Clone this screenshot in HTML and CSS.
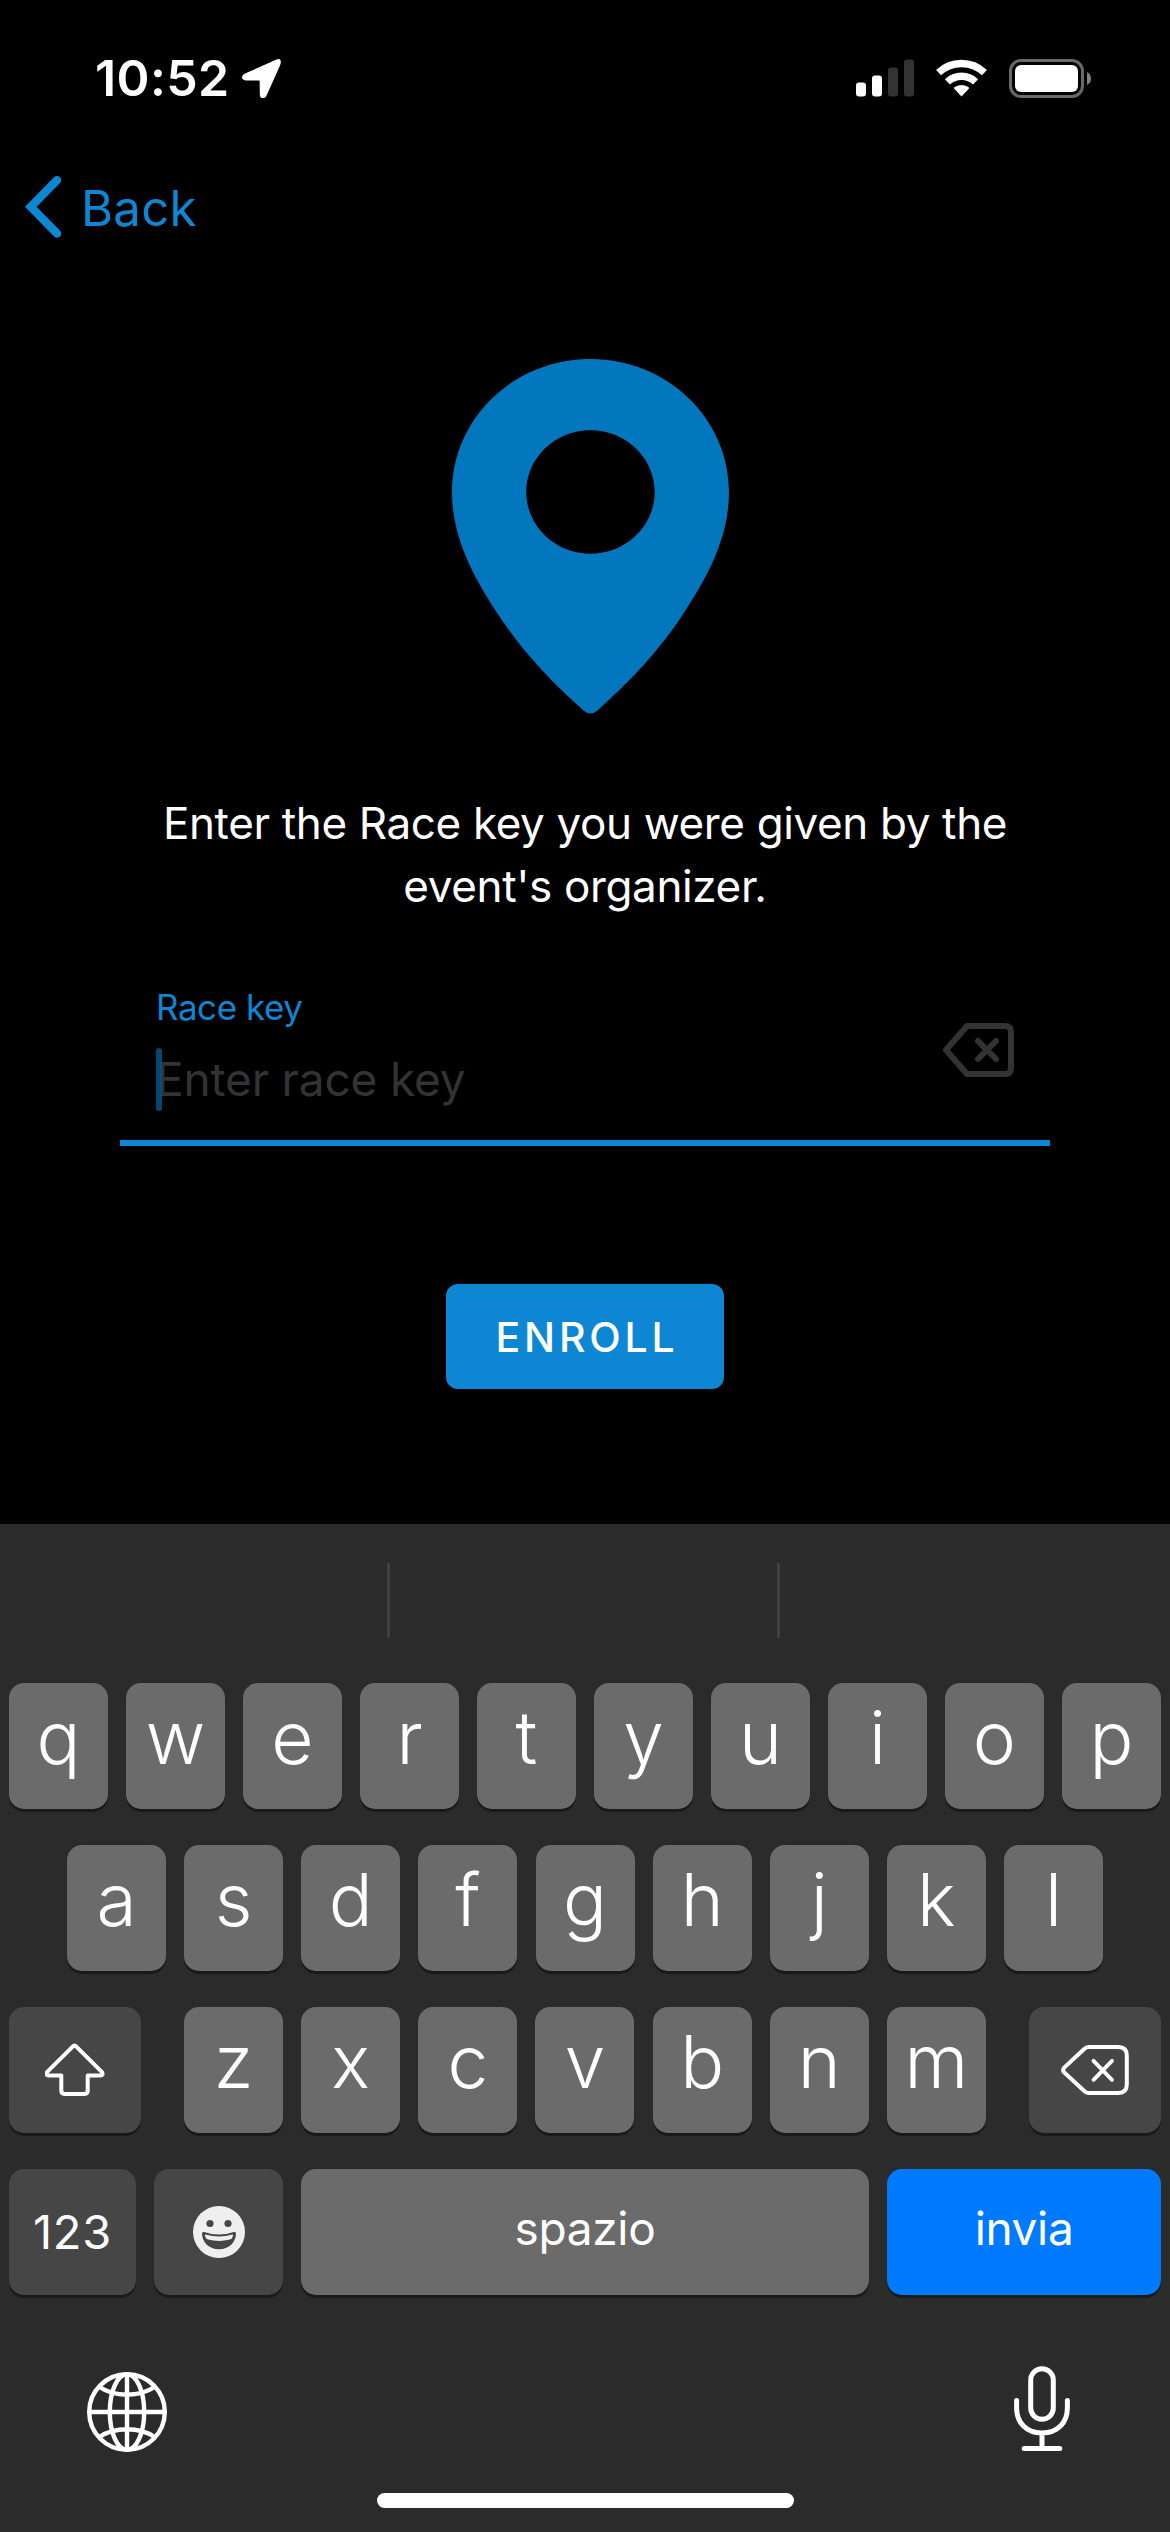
FILE: index.html
```html
<!DOCTYPE html>
<html lang="en">
<head>
<meta charset="utf-8">
<title>Enroll</title>
<link rel="stylesheet" href="styles.css">
</head>
<body>
<div class="screen">
  <header class="status">
    <div class="status-left">
      <span class="time">10:52</span>
      <svg class="location" width="39" height="39" viewBox="0 0 39 39"><path d="M34.6 0.5 Q39 -1.2 38.8 3.6 Q38.7 4.9 38 6.4 L24.6 36.4 Q23.2 39.4 20.4 39.2 Q17.8 38.8 17.8 35.6 L17.7 22.4 Q17.7 21.5 16.8 21.5 L3.6 21.4 Q0.3 21.3 0 18.6 Q-0.1 16 3 14.6 Z" fill="#fff"/></svg>
    </div>
    <div class="status-right">
      <svg width="58" height="38" viewBox="0 0 58 38"><g fill="#fff"><rect x="0" y="23.5" width="10" height="14" rx="3"/><rect x="16" y="16.5" width="10" height="21" rx="3"/></g><g fill="#333"><rect x="32" y="8.5" width="10" height="29" rx="3"/><rect x="48" y="0.5" width="10" height="37" rx="3"/></g></svg>
      <svg width="51" height="38" viewBox="0 0 51 38"><path d="M2.6 13.6 A33.3 33.3 0 0 1 48.4 13.6 M11.4 22.9 A20.5 20.5 0 0 1 39.6 22.9" fill="none" stroke="#fff" stroke-width="7.4"/><path d="M25.5 37.5 L17.8 29.3 Q18 28.4 18.8 27.9 Q25.5 23.9 32.2 27.9 Q33 28.4 33.2 29.3 Z" fill="#fff"/></svg>
      <svg width="82" height="39" viewBox="0 0 82 39"><rect x="1.5" y="1.5" width="72" height="36" rx="10.5" fill="none" stroke="#686868" stroke-width="3"/><rect x="6" y="6" width="63" height="27" rx="6" fill="#fff"/><path d="M78 13 Q82 15 82 19.5 Q82 24 78 26 Z" fill="#808080"/></svg>
    </div>
  </header>

  <nav class="nav">
    <svg width="36" height="63" viewBox="0 0 36 63"><path d="M32 4.2 L5.8 30.8 L32 57.5" fill="none" stroke="#0b87d4" stroke-width="8.3" stroke-linecap="round"/></svg>
    <span class="back">Back</span>
  </nav>

  <main class="content">
    <svg class="pin" width="277" height="355" viewBox="0 0 828 1063" preserveAspectRatio="none"><path fill="#0277bd" fill-rule="evenodd" d="M414 0 C643 0 828 178 828 398 C828 555 742 686 678 783 C605 888 535 962 434 1053 Q414 1070 394 1053 C293 962 223 888 150 783 C86 686 0 555 0 398 C0 178 185 0 414 0 Z M414 213 C308 213 222 296 222 398 C222 500 308 583 414 583 C520 583 606 500 606 398 C606 296 520 213 414 213 Z"/></svg>
    <p class="prompt">Enter the Race key you were given by the<br>event's organizer.</p>
    <div class="field">
      <div class="field-text">
        <span class="label">Race key</span>
        <span class="input"><span class="placeholder">Enter race key</span><i class="caret"></i></span>
      </div>
      <svg class="clear" width="72" height="54" viewBox="0 0 72 54" fill="none" stroke="#333" stroke-width="6"><path d="M25 3 H63 Q69 3 69 9 V45 Q69 51 63 51 H25 L4 27 Z" stroke-linejoin="round"/><path d="M36 18 L54 36 M54 18 L36 36" stroke-linecap="round"/></svg>
    </div>
    <button class="enroll">ENROLL</button>
  </main>

  <section class="keyboard">
    <div class="suggestions"><i></i><i></i><i></i></div>
    <div class="rows">
      <div class="row">
        <span class="key">q</span><span class="key">w</span><span class="key">e</span><span class="key">r</span><span class="key">t</span><span class="key">y</span><span class="key">u</span><span class="key">i</span><span class="key">o</span><span class="key">p</span>
      </div>
      <div class="row row-home">
        <span class="key">a</span><span class="key">s</span><span class="key">d</span><span class="key">f</span><span class="key">g</span><span class="key">h</span><span class="key">j</span><span class="key">k</span><span class="key">l</span>
      </div>
      <div class="row">
        <span class="key dark wide"><svg width="60" height="54" viewBox="0 0 60 54"><path d="M27.9 3.4 Q29.5 1.6 31.1 3.4 L57 29.2 Q58.6 32.4 55.5 32.4 H42.7 V47.6 Q42.7 50.9 39.5 50.9 H19.5 Q16.3 50.9 16.3 47.6 V32.4 H3.5 Q0.4 32.4 2 29.2 Z" fill="none" stroke="#fff" stroke-width="4" stroke-linejoin="round"/></svg></span>
        <div class="letters"><span class="key">z</span><span class="key">x</span><span class="key">c</span><span class="key">v</span><span class="key">b</span><span class="key">n</span><span class="key">m</span></div>
        <span class="key dark wide"><svg width="68" height="50" viewBox="0 0 68 50"><path d="M27.5 2 H57.5 Q65.8 2 65.8 10.5 V39.5 Q65.8 48 57.5 48 H27.5 Q25 48 23.2 46 L3.2 27.4 Q1 25 3.2 22.6 L23.2 4 Q25 2 27.5 2 Z" fill="none" stroke="#fff" stroke-width="4"/><path d="M32.5 15.8 L51 34.8 M51 15.8 L32.5 34.8" stroke="#fff" stroke-width="3.8" stroke-linecap="round"/></svg></span>
      </div>
      <div class="row row-bottom">
        <span class="key dark num">123</span>
        <span class="key dark emoji"><svg width="52" height="52" viewBox="0 0 52 52"><circle cx="26" cy="26" r="26" fill="#efefef"/><g fill="#464646"><circle cx="17" cy="17.5" r="3.6"/><circle cx="35" cy="17.5" r="3.6"/><path d="M9 27.4 Q9.2 25.6 11.2 26 Q26 31 40.8 26 Q42.8 25.6 43 27.4 C43 36 36 43.2 26 43.2 C16 43.2 9 36 9 27.4 Z"/></g><path d="M12.4 28.4 Q26 32.6 39.6 28.4 Q40.6 28.6 39.6 31 Q38.8 33 37 33.6 Q26 36.2 15 33.6 Q13.2 33 12.4 31 Q11.4 28.6 12.4 28.4 Z" fill="#efefef"/></svg></span>
        <span class="key space">spazio</span>
        <span class="key send">invia</span>
      </div>
    </div>
    <footer class="tray">
      <svg width="80" height="80" viewBox="0 0 80 80" fill="none" stroke="#fff" stroke-width="4.4"><circle cx="40" cy="40" r="37.8"/><ellipse cx="40" cy="40" rx="17.2" ry="37.8"/><path d="M40 2 V78 M2 40 H78 M12.5 15 Q24 22.7 40 22.7 Q56 22.7 67.5 15 M12.5 65 Q24 57.3 40 57.3 Q56 57.3 67.5 65"/></svg>
      <svg class="mic" width="56" height="86" viewBox="0 0 56 86" fill="none" stroke="#fff" stroke-width="5" stroke-linecap="round"><rect x="16.7" y="2.7" width="22.6" height="50.6" rx="11.3"/><path d="M2.6 34.5 V41.5 C2.6 57 12.5 67 28 67 C43.5 67 53.4 57 53.4 41.5 V34.5 M28 67 V82 M10.2 82.6 H45.8"/></svg>
    </footer>
    <div class="home"></div>
  </section>
</div>
</body>
</html>
```
FILE: styles.css
```css
* { box-sizing: border-box; }
body { margin: 0; background: #000; color: #fff; font-family: Inter, "Liberation Sans", sans-serif; }
svg { display: block; flex: none; }
.screen { width: 1170px; height: 2532px; display: flex; flex-direction: column; background: #000; overflow: hidden; }

.status { height: 156px; padding: 0 79px 0 95px; display: flex; align-items: center; justify-content: space-between; }
.status-left { display: flex; align-items: center; gap: 14px; }
.time { font-size: 50px; font-weight: 600; line-height: 60px; letter-spacing: 0.4px; width: 133px; white-space: nowrap; }
.status-right { display: flex; align-items: center; gap: 22px; }

.nav { height: 104px; padding-left: 25px; display: flex; align-items: center; gap: 20px; }
.nav svg { margin-bottom: 2px; }
.back { padding-top: 1px; color: #0b87d4; font-size: 49px; line-height: 60px; letter-spacing: 0.3px; }

.content { flex: 1; padding-top: 99px; display: flex; flex-direction: column; align-items: center; }
.pin { margin-left: 11px; }
.prompt { margin: 78px 0 0; font-size: 44px; line-height: 63px; letter-spacing: -0.36px; text-align: center; }
.field { width: 930px; margin-top: 68px; padding: 0 36px 29px; border-bottom: 6px solid #0b87d4; display: flex; align-items: center; justify-content: space-between; }
.field-text { display: flex; flex-direction: column; gap: 19px; }
.label { color: #0b87d4; font-size: 35px; line-height: 43px; letter-spacing: -0.45px; }
.input { position: relative; font-size: 46px; line-height: 63px; letter-spacing: -0.15px; color: #333; }
.caret { position: absolute; left: 0; top: 0; width: 6px; height: 63px; border-radius: 3px; background: rgba(6, 84, 132, 0.85); }
.clear { margin-top: 2px; }
.enroll { width: 278px; height: 105px; margin-top: 138px; padding: 0 0 0 4px; border: 0; border-radius: 12px; background: #0d87d3; color: #fff; font: 450 41px/50px Inter, sans-serif; letter-spacing: 3.8px; }

.keyboard { height: 1008px; background: #2b2b2b; display: flex; flex-direction: column; }
.suggestions { height: 159px; padding-top: 39px; display: flex; }
.suggestions i { width: 390px; height: 75px; border-right: 3px solid #404040; }
.suggestions i:last-child { border: 0; }
.rows { padding: 0 9px; display: flex; flex-direction: column; gap: 36px; }
.row { height: 126px; display: flex; justify-content: space-between; }
.row-home { padding: 0 58px; }
.letters { width: 802px; display: flex; justify-content: space-between; }
.key { width: 99px; height: 126px; padding-bottom: 16px; display: flex; align-items: center; justify-content: center; border-radius: 15px; background: #6b6b6b; box-shadow: 0 3px 0 #1a1a1a; font-size: 73px; font-weight: 350; line-height: 88px; }
.dark { background: #464646; padding-bottom: 0; }
.wide { width: 132px; }
.num { width: 127px; font-size: 47px; font-weight: 380; letter-spacing: 0.8px; }
.emoji { width: 129px; }
.space, .send { font-size: 46px; font-weight: 400; letter-spacing: -0.35px; padding-bottom: 8px; }
.space { width: 568px; }
.send { width: 274px; background: #007aff; }
.tray { height: 198px; padding: 71px 100px 0 87px; display: flex; align-items: flex-start; justify-content: space-between; }
.tray svg:first-child { margin-top: 6px; }
.home { width: 417px; height: 15px; border-radius: 8px; background: #fff; align-self: center; }
```
